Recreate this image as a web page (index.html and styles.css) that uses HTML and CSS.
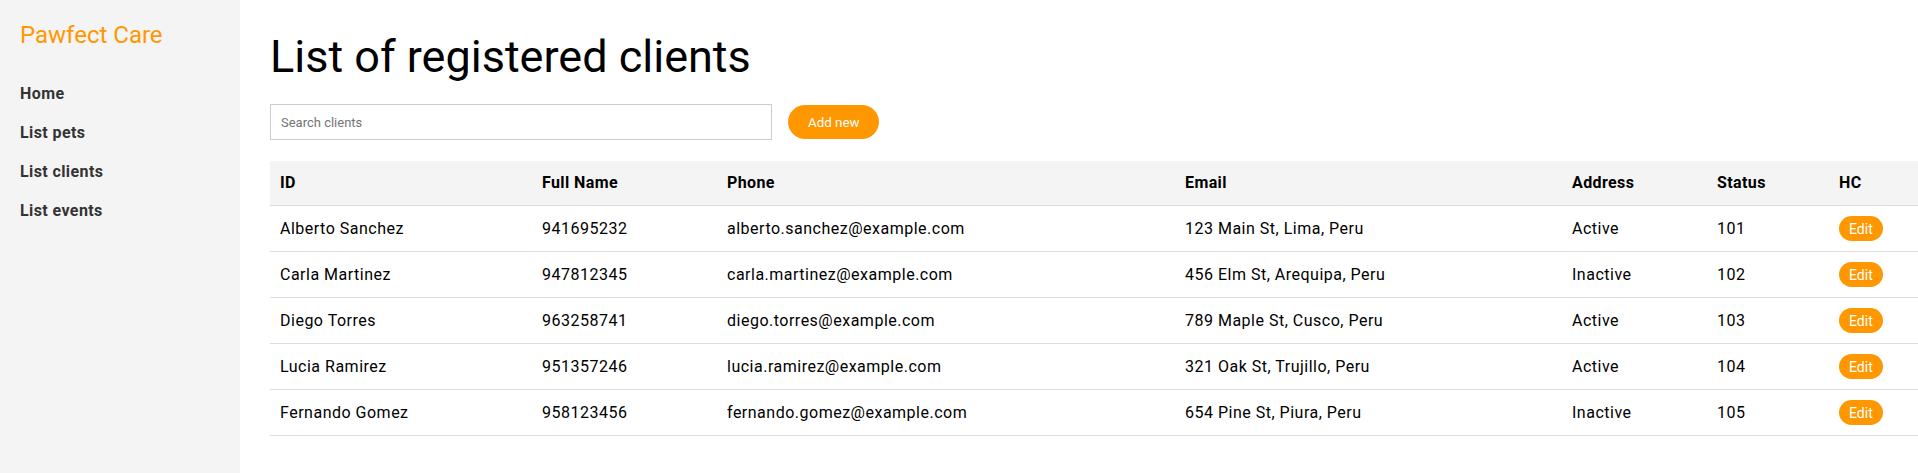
FILE: index.html
```html
<!DOCTYPE html>
<html lang="en">
<head>
<meta charset="utf-8">
<title>Pawfect Care - Clients</title>
<link rel="stylesheet" href="styles.css">
</head>
<body>
<div class="layout">
  <aside class="sidebar">
    <div class="logo">Pawfect Care</div>
    <nav class="nav">
      <a class="nav-link" href="#">Home</a>
      <a class="nav-link" href="#">List pets</a>
      <a class="nav-link" href="#">List clients</a>
      <a class="nav-link" href="#">List events</a>
    </nav>
  </aside>
  <main class="main">
    <h1 class="title">List of registered clients</h1>
    <div class="toolbar">
      <input class="search" type="text" placeholder="Search clients">
      <button class="btn-add">Add new</button>
    </div>
    <table class="clients">
      <colgroup>
        <col class="c-id"><col class="c-name"><col class="c-phone"><col class="c-email"><col class="c-addr"><col class="c-status"><col class="c-hc">
      </colgroup>
      <thead>
        <tr><th>ID</th><th>Full Name</th><th>Phone</th><th>Email</th><th>Address</th><th>Status</th><th>HC</th></tr>
      </thead>
      <tbody>
        <tr><td>Alberto Sanchez</td><td>941695232</td><td>alberto.sanchez@example.com</td><td>123 Main St, Lima, Peru</td><td>Active</td><td>101</td><td><button class="btn-edit">Edit</button></td></tr>
        <tr><td>Carla Martinez</td><td>947812345</td><td>carla.martinez@example.com</td><td>456 Elm St, Arequipa, Peru</td><td>Inactive</td><td>102</td><td><button class="btn-edit">Edit</button></td></tr>
        <tr><td>Diego Torres</td><td>963258741</td><td>diego.torres@example.com</td><td>789 Maple St, Cusco, Peru</td><td>Active</td><td>103</td><td><button class="btn-edit">Edit</button></td></tr>
        <tr><td>Lucia Ramirez</td><td>951357246</td><td>lucia.ramirez@example.com</td><td>321 Oak St, Trujillo, Peru</td><td>Active</td><td>104</td><td><button class="btn-edit">Edit</button></td></tr>
        <tr><td>Fernando Gomez</td><td>958123456</td><td>fernando.gomez@example.com</td><td>654 Pine St, Piura, Peru</td><td>Inactive</td><td>105</td><td><button class="btn-edit">Edit</button></td></tr>
      </tbody>
    </table>
  </main>
</div>
</body>
</html>
```
FILE: styles.css
```css
* { box-sizing: border-box; }
html, body { margin: 0; padding: 0; }
body {
  font-family: Roboto, "Liberation Sans", sans-serif;
  color: #000;
  background: #fff;
  overflow: hidden;
}
.layout {
  display: flex;
  min-height: 100vh;
}
.sidebar {
  width: 240px;
  flex: 0 0 240px;
  background: #f4f4f4;
  padding: 21px 20px;
}
.logo {
  font-size: 24px;
  line-height: 29px;
  color: #ff9800;
  margin-bottom: 24px;
}
.nav {
  display: flex;
  flex-direction: column;
}
.nav-link {
  display: block;
  padding: 10px 0;
  font-size: 16px;
  line-height: 19px;
  font-weight: 700;
  letter-spacing: 0.4px;
  color: #333;
  text-decoration: none;
}
.main {
  flex: 1;
  padding: 30px 0 0 30px;
  min-width: 0;
}
.title {
  margin: 0 0 21px;
  font-size: 45px;
  line-height: 53px;
  font-weight: 400;
}
.toolbar {
  display: flex;
  align-items: center;
  gap: 16px;
  margin-bottom: 21px;
}
.search {
  width: 502px;
  height: 36px;
  border: 1px solid #ccc;
  padding: 0 10px;
  font-family: Roboto, "Liberation Sans", sans-serif;
  font-size: 13px;
  outline: none;
}
.search::placeholder { color: #757575; }
.btn-add {
  height: 34px;
  padding: 0 20px;
  border: none;
  border-radius: 17px;
  background: #ff9800;
  color: #fff;
  font-family: Roboto, "Liberation Sans", sans-serif;
  font-size: 13.333px;
  cursor: pointer;
}
.clients {
  width: 1648px;
  border-collapse: collapse;
  table-layout: fixed;
}
.c-id { width: 262px; }
.c-name { width: 185px; }
.c-phone { width: 458px; }
.c-email { width: 387px; }
.c-addr { width: 145px; }
.c-status { width: 122px; }
.c-hc { width: 89px; }
.clients th {
  background: #f4f4f4;
  text-align: left;
  font-weight: 700;
  font-size: 16px;
  line-height: 20px;
  letter-spacing: 0.4px;
  padding: 12px 10px;
  border-bottom: 1px solid #ddd;
}
.clients td {
  font-size: 16px;
  line-height: 20px;
  letter-spacing: 0.5px;
  padding: 10px 10px;
  border-bottom: 1px solid #ddd;
  vertical-align: middle;
  white-space: nowrap;
}
.btn-edit {
  display: block;
  height: 25px;
  padding: 0 10px;
  border: none;
  border-radius: 13px;
  background: #ff9800;
  color: #fff;
  font-family: Roboto, "Liberation Sans", sans-serif;
  font-size: 14px;
  letter-spacing: 0;
  cursor: pointer;
}
```
